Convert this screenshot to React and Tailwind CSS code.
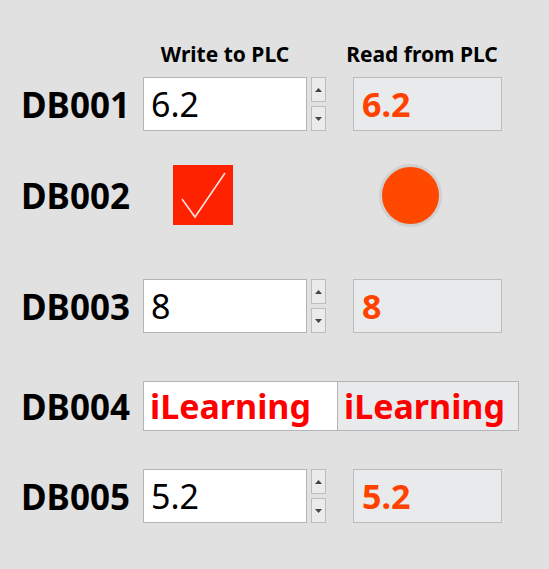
import React from 'react';

const font = { fontFamily: '"Noto Sans", "Open Sans", "Liberation Sans", sans-serif' };

function Label({ children }) {
  return <div className="w-[110px] shrink-0 pl-[1px] text-[35px] font-bold leading-none text-black">{children}</div>;
}

function Spin() {
  return (
    <div className="ml-[4px] flex h-[54px] w-[15px] flex-col justify-between">
      <div className="flex h-[25px] items-center justify-center border border-[#bdbdbd] bg-[#ebebeb]">
        <svg width="7" height="4" viewBox="0 0 7 4"><path d="M0 4 L3.5 0 L7 4 Z" fill="#444" /></svg>
      </div>
      <div className="flex h-[25px] items-center justify-center border border-[#bdbdbd] bg-[#ebebeb]">
        <svg width="7" height="4" viewBox="0 0 7 4"><path d="M0 0 L3.5 4 L7 0 Z" fill="#444" /></svg>
      </div>
    </div>
  );
}

function NumberRow({ name, value, className }) {
  return (
    <div className={'flex h-[54px] items-center ' + (className || '')}>
      <Label>{name}</Label>
      <div className="ml-[13px] flex h-[54px] w-[164px] items-center border border-[#b5b5b5] bg-white pl-[7px] text-[34px] leading-none text-black">
        {value}
      </div>
      <Spin />
      <div className="ml-[27px] flex h-[54px] w-[149px] items-center border border-[#bcbcbc] bg-[#e8eaec] pl-[8px] text-[34px] font-bold leading-none text-[#ff4200]">
        {value}
      </div>
    </div>
  );
}

export default function App() {
  return (
    <div className="h-[569px] w-[549px] bg-[#e1e1e1] pl-[20px]" style={font}>
      <div className="flex h-[66px] items-end whitespace-nowrap pb-[1px] text-[21px] font-bold leading-none text-black">
        <div className="ml-[123px] w-[164px] text-center">Write to PLC</div>
        <div className="ml-[25px] w-[180px] text-center">Read from PLC</div>
      </div>
      <NumberRow name="DB001" value="6.2" className="mt-[11px]" />
      <div className="mt-[34px] flex h-[60px] items-center">
        <Label>DB002</Label>
        <div className="ml-[43px] h-[60px] w-[60px] bg-[#ff2200]">
          <svg width="60" height="60" viewBox="0 0 60 60">
            <path d="M9 34 L22 52 L52 8" fill="none" stroke="#ffe0dc" strokeWidth="1.6" />
          </svg>
        </div>
        <div className="ml-[146px] h-[63px] w-[63px] rounded-full border-[3px] border-[#d0d0d0] bg-[#ff4800]" />
      </div>
      <NumberRow name="DB003" value="8" className="mt-[54px]" />
      <div className="mt-[48px] flex h-[50px] items-center">
        <Label>DB004</Label>
        <div className="ml-[13px] flex h-[50px] w-[195px] items-center border border-[#b5b5b5] bg-white pl-[6px] text-[34px] font-bold leading-none text-[#ff0000]">
          iLearning
        </div>
        <div className="flex h-[50px] w-[181px] items-center border border-l-0 border-[#b5b5b5] bg-[#e8eaec] pl-[6px] text-[34px] font-bold leading-none text-[#ff0000]">
          iLearning
        </div>
      </div>
      <NumberRow name="DB005" value="5.2" className="mt-[38px]" />
    </div>
  );
}
